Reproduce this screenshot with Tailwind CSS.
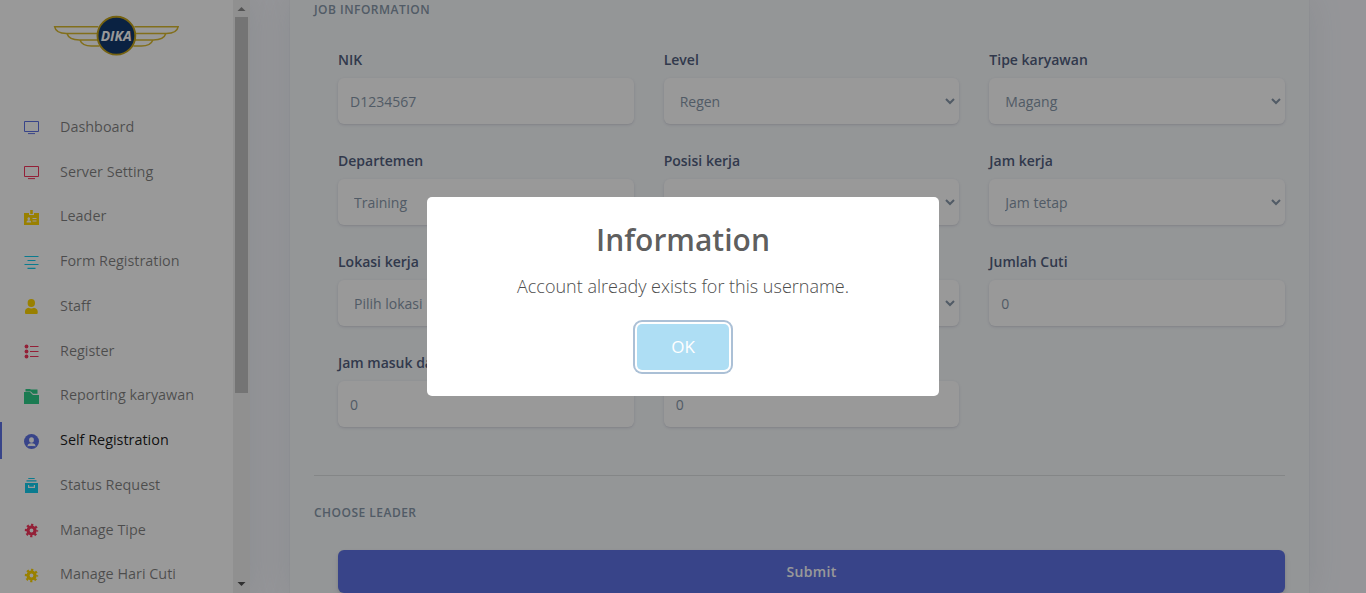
<!DOCTYPE html>
<html lang="id">
<head>
<meta charset="utf-8">
<title>Self Registration</title>
<script src="https://cdn.jsdelivr.net/npm/@tailwindcss/browser@4"></script>
</head>
<body class="h-[593px] overflow-hidden bg-[#f8f9fe] font-['Open_Sans',sans-serif] text-[#525f7f]">
<div class="flex h-full">
  <nav class="relative z-10 flex h-full w-[250px] shrink-0 bg-white shadow-[0_0_32px_0_rgba(136,152,170,0.15)]">
    <div class="flex w-[233px] flex-col">
      <div class="h-[104.4px] shrink-0 pl-[53px] pt-[14px]">
        <svg class="h-[42px] w-[127px]" viewBox="-0.400 0 127 42" fill="none">
          <g stroke="#d9b92e" stroke-width="1.500">
            <path d="M45 12.700H1.200C2 17 6 19.500 13 19.500H45M13.500 19.500C15 24 19 26 26 26H45M26.500 26C28 30 32 32 38 32H46"/>
            <path d="M81 12.700H124.800C124 17 120 19.500 113 19.500H81M112.500 19.500C111 24 107 26 100 26H81M99.500 26C98 30 94 32 88 32H80"/>
          </g>
          <circle cx="63" cy="21.700" r="18.900" fill="#123a6e" stroke="#c4a31b" stroke-width="1.900"/>
          <text x="62.800" y="27" text-anchor="middle" textLength="31" lengthAdjust="spacingAndGlyphs" font-family="Open Sans, sans-serif" font-style="italic" font-weight="700" font-size="14" fill="#fff">DIKA</text>
        </svg>
      </div>
      <ul class="flex flex-col text-[14.4px] text-black/50">
        <li class="flex h-[44.75px] items-center pl-[24px]"><svg class="mr-[21px] size-[15px] translate-y-[1px] text-[#5e72e4]" viewBox="0 0 15 15" fill="none" stroke="currentColor"><path d="M.5 1.500h14v10H.5zM4 13.600h7"/></svg>Dashboard</li>
        <li class="flex h-[44.75px] items-center pl-[24px]"><svg class="mr-[21px] size-[15px] translate-y-[1px] text-[#f5365c]" viewBox="0 0 15 15" fill="none" stroke="currentColor"><path d="M.5 1.500h14v10H.5zM4 13.600h7"/></svg>Server Setting</li>
        <li class="flex h-[44.75px] items-center pl-[24px]"><svg class="mr-[21px] size-[15px] translate-y-[1px] text-[#ffd600]" viewBox="0 0 15 15" fill="currentColor"><path fill-rule="evenodd" d="M0 3h5v2h5V3h5v12H0zM4.700 7.300a1.300 1.500 0 1 0 .1 0zM2.500 12.500h4.700c0-1.600-1-2.300-2.400-2.300s-2.300.7-2.300 2.300zM8.500 8v1h4V8zM8.500 10.500v1h4v-1z"/><path d="M6.200 0h2.600v4H6.200z"/></svg>Leader</li>
        <li class="flex h-[44.75px] items-center pl-[24px]"><svg class="mr-[21px] size-[15px] translate-y-[1px] text-[#11cdef]" viewBox="0 0 15 15" stroke="currentColor" stroke-width="1.200"><path d="M.5 1.500h14M3.500 5.500h8M.5 9.500h14M3.500 13.400h8"/></svg>Form Registration</li>
        <li class="flex h-[44.75px] items-center pl-[24px]"><svg class="mr-[21px] size-[15px] translate-y-[1px] text-[#ffd600]" viewBox="0 0 15 15" fill="currentColor"><ellipse cx="7.300" cy="4" rx="3.700" ry="4"/><path d="M1 15v-2.500C1 10.500 2.500 9 4.500 8.800c1.800.9 3.700.9 5.500 0 2 .2 3.700 1.700 3.700 3.700V14q0 1-1 1H2q-1 0-1-1z"/></svg>Staff</li>
        <li class="flex h-[44.75px] items-center pl-[24px]"><svg class="mr-[21px] size-[15px] translate-y-[1px] text-[#f5365c]" viewBox="0 0 15 15" fill="currentColor"><path d="M6 2h8.500v1H6zM6 7h8.500v1H6zM6 12h8.500v1H6z"/><circle cx="2.500" cy="2.500" r="1.900"/><circle cx="2.500" cy="7.500" r="1.900"/><circle cx="2.500" cy="12.500" r="1.900"/></svg>Register</li>
        <li class="flex h-[44.75px] items-center pl-[24px]"><svg class="mr-[21px] size-[15px] translate-y-[1px] text-[#2dce89]" viewBox="0 0 15 15" fill="currentColor"><path d="M1.500 0h4.700l.5.500h6.800v4.300H9L6.800 2.500H1.500z"/><path d="M0 3h6l3 3h6v9H0z"/></svg>Reporting karyawan</li>
        <li class="relative flex h-[44.75px] items-center pl-[24px] text-black/90 before:absolute before:left-0 before:top-[4px] before:h-[37px] before:w-[2px] before:bg-[#5e72e4]"><svg class="mr-[21px] size-[15px] translate-y-[1px] text-[#5e72e4]" viewBox="0 0 15 15"><circle cx="7.500" cy="7.500" r="7.500" fill="currentColor"/><ellipse cx="7.500" cy="6" rx="2.400" ry="2.700" fill="#fff"/><path d="M3.500 12.500c0-2 1.200-3.200 4-3.200s4 1.200 4 3.200z" fill="#fff"/><ellipse cx="7.500" cy="12.800" rx="4" ry=".8" fill="currentColor"/></svg>Self Registration</li>
        <li class="flex h-[44.75px] items-center pl-[24px]"><svg class="mr-[21px] size-[15px] translate-y-[1px] text-[#11cdef]" viewBox="0 0 15 15" fill="currentColor"><path d="M4.300 0h6.400v1H4.300zM2.500 2.300h10v1.200h-10z"/><path fill-rule="evenodd" d="M1 5h13v10H1zM4 7v3h7V7H9.800v1.800H5.200V7z"/></svg>Status Request</li>
        <li class="flex h-[44.75px] items-center pl-[24px]"><svg class="mr-[21px] size-[15px] translate-y-[1px] text-[#f5365c]" viewBox="0 0 15 15"><circle cx="7.500" cy="7.500" r="3.500" fill="none" stroke="currentColor" stroke-width="3.200"/><circle cx="7.500" cy="7.500" r="5.600" fill="none" stroke="currentColor" stroke-width="2.200" stroke-dasharray="2.200 2.198" stroke-dashoffset="1.100"/></svg>Manage Tipe</li>
        <li class="flex h-[44.75px] items-center pl-[24px]"><svg class="mr-[21px] size-[15px] translate-y-[1px] text-[#ffd600]" viewBox="0 0 15 15"><circle cx="7.500" cy="7.500" r="3.500" fill="none" stroke="currentColor" stroke-width="3.200"/><circle cx="7.500" cy="7.500" r="5.600" fill="none" stroke="currentColor" stroke-width="2.200" stroke-dasharray="2.200 2.198" stroke-dashoffset="1.100"/></svg>Manage Hari Cuti</li>
      </ul>
    </div>
    <div class="flex w-[17px] flex-col items-start bg-[#f1f1f1]">
      <svg class="h-[17px] w-[17px] shrink-0" viewBox="0 0 17 17"><path d="M4.500 11h8l-4-4z" fill="#8b8b8b"/></svg>
      <div class="ml-[2px] h-[376px] w-[13px] bg-[#c1c1c1]"></div>
      <svg class="mt-auto h-[17px] w-[17px] shrink-0" viewBox="0 0 17 17"><path d="M4.500 6h8l-4 4z" fill="#505050"/></svg>
    </div>
  </nav>
  <main class="h-full flex-1 pl-[40px] pr-[57px]">
    <div class="h-full bg-[#f7fafc] px-[24px] shadow-[0_0_32px_0_rgba(136,152,170,0.15),0_0_0_1px_rgba(0,0,0,0.02)]">
      <h6 class="h-[49px] pt-px text-[12px] font-semibold leading-[18px] tracking-[0.48px] text-[#8898aa]">JOB INFORMATION</h6>
      <div class="grid grid-cols-3 gap-x-[30px] pl-[24px] text-[14px]">
        <div class="h-[101px]"><label class="mb-[8px] block leading-[21px] font-semibold">NIK</label><input class="h-[46px] w-full rounded-md bg-white px-[12px] text-[#8898aa] shadow-[0_1px_3px_rgba(50,50,93,0.15),0_1px_0_rgba(0,0,0,0.02)]" value="D1234567"></div>
        <div class="h-[101px]"><label class="mb-[8px] block leading-[21px] font-semibold">Level</label><select class="h-[46px] w-full rounded-md border-r border-white bg-white px-[12px] text-[#8898aa] shadow-[0_1px_3px_rgba(50,50,93,0.15),0_1px_0_rgba(0,0,0,0.02)]"><option>Regen</option></select></div>
        <div class="h-[101px]"><label class="mb-[8px] block leading-[21px] font-semibold">Tipe karyawan</label><select class="h-[46px] w-full rounded-md border-r border-white bg-white px-[12px] text-[#8898aa] shadow-[0_1px_3px_rgba(50,50,93,0.15),0_1px_0_rgba(0,0,0,0.02)]"><option>Magang</option></select></div>
        <div class="h-[101px]"><label class="mb-[8px] block leading-[21px] font-semibold">Departemen</label><select class="h-[46px] w-full rounded-md border-r border-white bg-white px-[12px] text-[#8898aa] shadow-[0_1px_3px_rgba(50,50,93,0.15),0_1px_0_rgba(0,0,0,0.02)]"><option>Training</option></select></div>
        <div class="h-[101px]"><label class="mb-[8px] block leading-[21px] font-semibold">Posisi kerja</label><select class="h-[46px] w-full rounded-md border-r border-white bg-white px-[12px] text-[#8898aa] shadow-[0_1px_3px_rgba(50,50,93,0.15),0_1px_0_rgba(0,0,0,0.02)]"><option></option></select></div>
        <div class="h-[101px]"><label class="mb-[8px] block leading-[21px] font-semibold">Jam kerja</label><select class="h-[46px] w-full rounded-md border-r border-white bg-white px-[12px] text-[#8898aa] shadow-[0_1px_3px_rgba(50,50,93,0.15),0_1px_0_rgba(0,0,0,0.02)]"><option>Jam tetap</option></select></div>
        <div class="h-[101px]"><label class="mb-[8px] block leading-[21px] font-semibold">Lokasi kerja</label><select class="h-[46px] w-full rounded-md border-r border-white bg-white px-[12px] text-[#8898aa] shadow-[0_1px_3px_rgba(50,50,93,0.15),0_1px_0_rgba(0,0,0,0.02)]"><option>Pilih lokasi</option></select></div>
        <div class="h-[101px] pt-[29px]"><select class="h-[46px] w-full rounded-md border-r border-white bg-white px-[12px] text-[#8898aa] shadow-[0_1px_3px_rgba(50,50,93,0.15),0_1px_0_rgba(0,0,0,0.02)]"><option></option></select></div>
        <div class="h-[101px]"><label class="mb-[8px] block leading-[21px] font-semibold">Jumlah Cuti</label><input class="h-[46px] w-full rounded-md bg-white px-[12px] text-[#8898aa] shadow-[0_1px_3px_rgba(50,50,93,0.15),0_1px_0_rgba(0,0,0,0.02)]" value="0"></div>
        <div class="h-[101px]"><label class="mb-[8px] block leading-[21px] font-semibold">Jam masuk dari</label><input class="h-[46px] w-full rounded-md bg-white px-[12px] text-[#8898aa] shadow-[0_1px_3px_rgba(50,50,93,0.15),0_1px_0_rgba(0,0,0,0.02)]" value="0"></div>
        <div class="h-[101px] pt-[29px]"><input class="h-[46px] w-full rounded-md bg-white px-[12px] text-[#8898aa] shadow-[0_1px_3px_rgba(50,50,93,0.15),0_1px_0_rgba(0,0,0,0.02)]" value="0"></div>
      </div>
      <hr class="mt-[22px] border-black/10">
      <h6 class="mt-[28px] h-[46px] text-[12px] font-semibold leading-[18px] tracking-[0.48px] text-[#8898aa]">CHOOSE LEADER</h6>
      <div class="pl-[24px]"><button class="h-[43px] w-full rounded-md bg-[#5e72e4] text-[14px] font-semibold tracking-[0.35px] text-white shadow-[0_4px_6px_rgba(50,50,93,0.11),0_1px_3px_rgba(0,0,0,0.08)]">Submit</button></div>
    </div>
  </main>
</div>
<div class="fixed inset-0 z-20 bg-black/40"></div>
<div class="fixed left-[427px] top-[197px] z-30 flex h-[199px] w-[512px] flex-col items-center rounded-[5px] bg-white">
  <h2 class="mt-[23px] text-[30px] font-semibold leading-[40px] text-black/65">Information</h2>
  <p class="mt-[13px] text-[18px] font-light leading-[27px] text-[#4d4d4d]">Account already exists for this username.</p>
  <button class="mt-[24px] h-[46px] w-[92px] shrink-0 rounded-[5px] bg-[#aedef4] text-[17px] text-white shadow-[0_0_0_2px_#fff,0_0_0_4px_#abc0d6]">OK</button>
</div>
</body>
</html>
